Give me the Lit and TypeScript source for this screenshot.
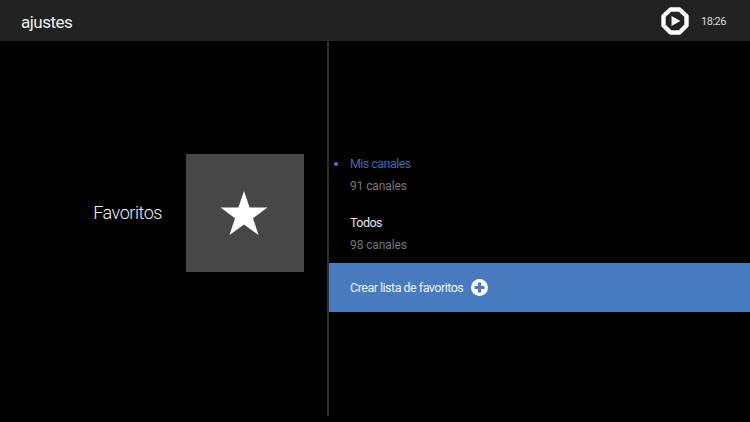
import { LitElement, html, css } from 'lit';
import { customElement } from 'lit/decorators.js';

@customElement('app-root')
export class AppRoot extends LitElement {
  static styles = css`
    :host {
      display: block;
      width: 750px;
      height: 422px;
      background: #000;
      overflow: hidden;
      font-family: Roboto, "Liberation Sans", sans-serif;
      font-weight: 300;
      color: #fff;
    }

    .topbar {
      height: 41px;
      background: #222;
      display: flex;
      align-items: center;
      padding: 0 24px 0 21px;
      box-sizing: border-box;
    }

    .title {
      font-size: 17px;
      font-weight: 400;
      letter-spacing: -0.5px;
      color: #eee;
      flex: 1;
      padding-top: 2px;
    }

    .logo {
      display: block;
      margin-right: 12px;
    }

    .clock {
      font-size: 11px;
      font-weight: 400;
      letter-spacing: -0.5px;
      color: #ddd;
      padding-top: 1px;
    }

    .main {
      display: flex;
      height: 375px;
    }

    .left {
      width: 327px;
      box-sizing: border-box;
      padding: 0 23px 32px 0;
      display: flex;
      align-items: center;
      justify-content: flex-end;
      gap: 24px;
    }

    .label {
      font-size: 18px;
      letter-spacing: -0.45px;
      color: #f2f2f2;
    }

    .tile {
      width: 118px;
      height: 118px;
      background: #474747;
      display: flex;
      align-items: center;
      justify-content: center;
    }

    .tile svg {
      margin-left: -3px;
    }

    .divider {
      width: 2px;
      background: #2c2c2c;
    }

    .list {
      flex: 1;
      padding-top: 113px;
      font-size: 12px;
    }

    .item {
      position: relative;
      padding-left: 21px;
      height: 59px;
    }

    .name {
      line-height: 20px;
      font-size: 12.5px;
      letter-spacing: -0.55px;
      color: #e8e8e8;
      font-weight: 400;
    }

    .count {
      line-height: 20px;
      margin-top: 2px;
      color: #777;
      font-weight: 400;
      letter-spacing: -0.1px;
    }

    .selected .name {
      color: #3f68a8;
    }

    .dot {
      position: absolute;
      left: 5px;
      top: 8px;
      width: 4px;
      height: 4px;
      border-radius: 50%;
      background: #4a7cc4;
    }

    .action {
      height: 49px;
      margin-top: -9px;
      background: #477abf;
      display: flex;
      align-items: center;
      gap: 8px;
      padding-left: 21px;
      font-size: 12.5px;
      letter-spacing: -0.5px;
      font-weight: 400;
      color: #eef3fa;
    }
  `;

  render() {
    return html`
      <div class="topbar">
        <div class="title">ajustes</div>
        <svg class="logo" width="28" height="28" viewBox="0 0 28 28">
          <path d="M9.5 2.5 L18.5 2.5 L25.5 9 L25.5 18.5 L18.5 25.5 L9.5 25.5 L2.5 18.5 L2.5 9 Z" fill="#222" stroke="#fff" stroke-width="4.4" stroke-linejoin="round"/>
          <path d="M10.5 9 L19.5 14 L10.5 19 Z" fill="#f4f4f4"/>
        </svg>
        <div class="clock">18:26</div>
      </div>
      <div class="main">
        <div class="left">
          <div class="label">Favoritos</div>
          <div class="tile">
            <svg width="48" height="46" viewBox="0 0 48 46">
              <path d="M24 1 L29.6 17.6 L47.5 17.6 L33 28.2 L38.5 45 L24 34.6 L9.5 45 L15 28.2 L.5 17.6 L18.4 17.6 Z" fill="#fff"/>
            </svg>
          </div>
        </div>
        <div class="divider"></div>
        <div class="list">
          <div class="item selected">
            <span class="dot"></span>
            <div class="name">Mis canales</div>
            <div class="count">91 canales</div>
          </div>
          <div class="item">
            <div class="name">Todos</div>
            <div class="count">98 canales</div>
          </div>
          <div class="action">
            <span>Crear lista de favoritos</span>
            <svg width="17" height="17" viewBox="0 0 17 17">
              <circle cx="8.5" cy="8.5" r="8.5" fill="#fff"/>
              <path d="M8.5 3.5 V13.5 M3.5 8.5 H13.5" stroke="#477abf" stroke-width="3.2"/>
            </svg>
          </div>
        </div>
      </div>
    `;
  }
}
